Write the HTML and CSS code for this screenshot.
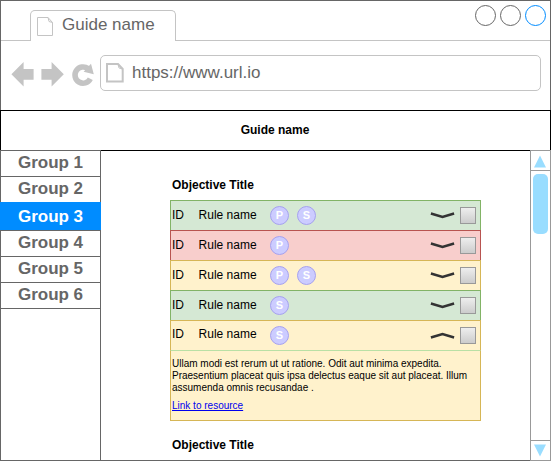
FILE: index.html
```html
<!DOCTYPE html>
<html lang="en">
<head>
<meta charset="utf-8">
<title>Guide name</title>
<link rel="stylesheet" href="styles.css">
</head>
<body>
<svg class="defs" width="0" height="0">
  <defs>
    <symbol id="page" viewBox="0 0 17 20"><path d="M.5.5H11L15.5 5.5V18.5H.5ZM11 .5L12 4.5L15.5 5.5"/></symbol>
    <symbol id="chevron" viewBox="0 0 26 8"><path d="M.9 1.6L12.5 4.9L24.1 1.6"/></symbol>
  </defs>
</svg>
<div class="window">
  <div class="tabs">
    <div class="tab">
      <svg class="tab-icon" width="17" height="20"><use href="#page"/></svg>
      <span>Guide name</span>
    </div>
    <div class="tab-rest"><i class="dot"></i><i class="dot"></i><i class="dot blue"></i></div>
  </div>
  <div class="toolbar">
    <svg class="nav" width="84" height="25" viewBox="0 0 84 25">
      <path d="M.4 12.3L12.6 0V7H22.6V17.7H12.6V24.5Z"/>
      <path d="M52.8 12.3L40.6 0V7H30.4V17.7H40.6V24.5Z"/>
      <path class="reload" d="M79.3 16.8A8.1 8.1 0 1 1 77 6.6"/>
      <path d="M80 1.7L82.8 12.2L72.6 9.8Z"/>
    </svg>
    <div class="url">
      <svg class="url-icon" width="18" height="20" viewBox="0 0 18 20"><path d="M1 1H12L16.7 6V18.5H1Z"/><path class="fold" d="M12 1L13 5L16.7 6"/></svg>
      <span>https://www.url.io</span>
    </div>
  </div>
</div>
<header class="title">Guide name</header>
<div class="body">
  <nav class="menu">
    <div class="item">Group 1</div>
    <div class="item">Group 2</div>
    <div class="item active">Group 3</div>
    <div class="item">Group 4</div>
    <div class="item">Group 5</div>
    <div class="item">Group 6</div>
  </nav>
  <main class="content">
    <h2>Objective Title</h2>
    <section class="rules">
      <div class="rule green"><span class="id">ID</span><span class="name">Rule name</span><b class="badge">P</b><b class="badge">S</b><svg class="chev" width="26" height="8"><use href="#chevron"/></svg><i class="check"></i></div>
      <div class="rule red"><span class="id">ID</span><span class="name">Rule name</span><b class="badge">P</b><svg class="chev" width="26" height="8"><use href="#chevron"/></svg><i class="check"></i></div>
      <div class="rule yellow"><span class="id">ID</span><span class="name">Rule name</span><b class="badge">P</b><b class="badge">S</b><svg class="chev" width="26" height="8"><use href="#chevron"/></svg><i class="check"></i></div>
      <div class="rule green"><span class="id">ID</span><span class="name">Rule name</span><b class="badge">S</b><svg class="chev" width="26" height="8"><use href="#chevron"/></svg><i class="check"></i></div>
      <div class="rule yellow open"><span class="id">ID</span><span class="name">Rule name</span><b class="badge">S</b><svg class="chev up" width="26" height="8"><use href="#chevron"/></svg><i class="check"></i></div>
      <div class="detail">
        <p>Ullam modi est rerum ut ut ratione. Odit aut minima expedita.<br>Praesentium placeat quis ipsa delectus eaque sit aut placeat. Illum<br>assumenda omnis recusandae .</p>
        <a href="#">Link to resource</a>
      </div>
    </section>
    <h2>Objective Title</h2>
  </main>
  <aside class="scroll">
    <div class="arrow"><svg width="12" height="13" viewBox="0 0 12 13"><path d="M6 .5L12 12.5H0Z"/></svg></div>
    <div class="track"><div class="thumb"></div></div>
    <div class="arrow down"><svg width="12" height="13" viewBox="0 0 12 13"><path d="M0 .5H12L6 12.5Z"/></svg></div>
  </aside>
</div>
</body>
</html>
```
FILE: styles.css
```css
* { box-sizing: border-box; }
body {
  margin: 0;
  width: 551px;
  height: 461px;
  overflow: hidden;
  background: #fff;
  font-family: "Liberation Sans", Arial, sans-serif;
  font-size: 12px;
  color: #000;
}
.defs { position: absolute; }
svg { display: block; flex: none; }

.window {
  height: 110px;
  border: 1px solid #666;
  border-bottom: 0;
  color: #666;
  font-size: 17px;
}
.tabs { display: flex; height: 40px; }
.tabs::before { content: ""; width: 29px; border-bottom: 1px solid #c4c4c4; }
.tab {
  display: flex;
  width: 146px;
  height: 31px;
  margin-top: 9px;
  padding: 6px 0 0 6px;
  border: 1px solid #c4c4c4;
  border-bottom: 0;
  border-radius: 5px 5px 0 0;
}
.tab span { margin-left: 8px; line-height: 20px; margin-top: -2px; }
.tab-icon { fill: none; stroke: #c4c4c4; }
.tab-rest {
  flex: 1;
  display: flex;
  justify-content: flex-end;
  gap: 4px;
  padding: 4px 4px 0 0;
  border-bottom: 1px solid #c4c4c4;
}
.dot { width: 21px; height: 21px; border: 1px solid #666; border-radius: 50%; }
.dot.blue { border-color: #008cff; }
.toolbar { display: flex; padding: 14px 9px 0 10px; }
.nav { margin: 7px 5px 0 0; fill: #c4c4c4; }
.nav .reload { fill: none; stroke: #c4c4c4; stroke-width: 5.6; }
.url {
  flex: 1;
  display: flex;
  height: 36px;
  padding: 7px 0 0 5px;
  border: 1px solid #c4c4c4;
  border-radius: 5px;
}
.url span { margin-left: 8px; line-height: 20px; }
.url-icon { fill: none; stroke: #c4c4c4; stroke-width: 2; }
.url-icon .fold { stroke-width: 1; }

.title {
  height: 40px;
  padding-right: 1px;
  border: 1px solid #000;
  border-bottom: 0;
  font-weight: bold;
  line-height: 38px;
  text-align: center;
}
.body { display: flex; height: 311px; }
.menu {
  width: 101px;
  border: 1px solid #666;
  color: #666;
  font-size: 17px;
  font-weight: bold;
  text-align: center;
}
.item { height: 26px; line-height: 23px; border-bottom: 1px solid #666; }
.item.active {
  height: 28px;
  margin: -1px -1px 0;
  line-height: 29px;
  background: #008cff;
  color: #fff;
  border: 0;
}
.item.active + .item { height: 27px; border-top: 1px solid #666; }

.content {
  width: 429px;
  padding-left: 69px;
  border-top: 1px solid #000;
  border-bottom: 1px solid #666;
}
h2 { margin: 0 0 0 2px; font-size: 12px; line-height: 14px; }
h2:first-child { margin-top: 27px; margin-bottom: 8px; }
.rules { width: 311px; }
.rules + h2 { margin-top: 17px; }
.rule {
  display: flex;
  height: 30px;
  padding: 0 4px 0 1px;
  border: 1px solid;
  border-bottom: 0;
}
.green { background: #d5e8d4; border-color: #82b366; }
.red { background: #f8cecc; border-color: #b85450; }
.yellow { background: #fff2cc; border-color: #d6b656; }
.id, .name { line-height: 28px; }
.id { width: 26.6px; }
.name { width: 71.4px; }
.open .id, .open .name { line-height: 26px; }
.badge {
  width: 19px;
  height: 19px;
  margin: 5px 8px 0 0;
  border: 1px solid #a6a1f0;
  border-radius: 50%;
  background: #ccccff;
  color: #fff;
  font-size: 11px;
  line-height: 17px;
  text-align: center;
}
.chev { margin: 11px 4px 0 auto; fill: none; stroke: #333; stroke-width: 2.6; }
.chev.up { margin-top: 10px; transform: scaleY(-1); }
.check {
  width: 16px;
  height: 17px;
  margin-top: 6px;
  border: 1px solid #999;
  background: linear-gradient(#eee, #ccc);
}
.detail {
  height: 71px;
  padding: 7px 1px;
  border: 1px solid #d6b656;
  border-top-color: #b9e0a5;
  background: #fff2cc;
  font-size: 10px;
  line-height: 12px;
}
.detail p { margin: 0 0 6px; white-space: nowrap; }
.detail a { color: #00e; }

.scroll {
  display: flex;
  flex-direction: column;
  width: 21px;
  border: 1px solid #999;
}
.arrow { height: 20px; padding: 4px 0 0 3px; border-bottom: 1px solid #999; }
.arrow path { fill: #99ddff; }
.track { flex: 1; padding: 3px 2px; }
.thumb { width: 15px; height: 60px; border-radius: 5px; background: #99ddff; }
.arrow.down { border-top: 1px solid #999; border-bottom: 0; padding-top: 3px; }
```
